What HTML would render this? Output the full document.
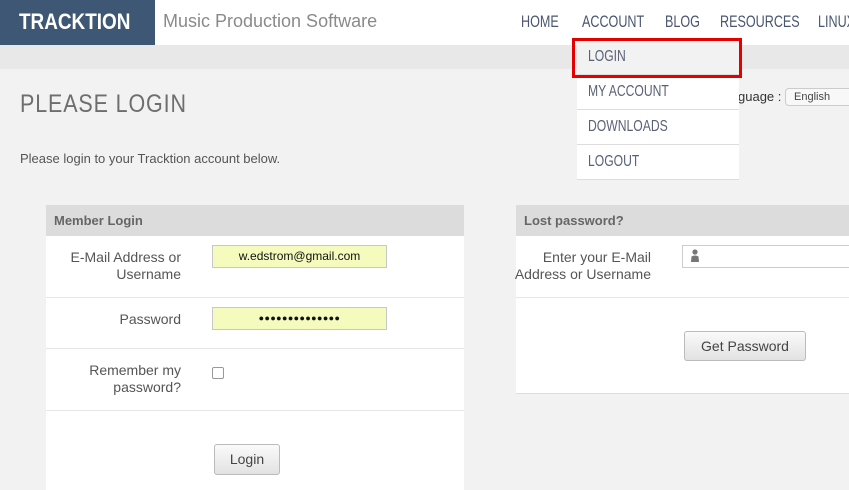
<!DOCTYPE html>
<html><head><style>
*{margin:0;padding:0;box-sizing:border-box}
body{width:849px;height:490px;overflow:hidden;background:#f2f2f2;font-family:"Liberation Sans",sans-serif;position:relative}
.a{position:absolute;white-space:nowrap}
.c{transform:scaleX(0.74);transform-origin:0 0}
.nav{font-size:17px;color:#4a5670;top:12px}
.dd{left:577px;width:162px;height:35px;background:#fff;border-bottom:1px solid #ddd;font-size:16px;color:#5a6278;padding:8px 0 0 11px}
.dd span{display:inline-block;transform:scaleX(0.76);transform-origin:0 0}
.lbl{font-size:14px;color:#555;text-align:right;line-height:17px}
.sep{height:1px;background:#e6e6e6}
.inp{background:#f5fbbd;border:1px solid #c8c8c8;height:23px;font-size:12px;color:#111;text-align:center;line-height:21px}
.btn{border:1px solid #bbb;border-radius:3px;background:linear-gradient(#fafafa,#e2e2e2);font-size:14px;color:#444;text-align:center}
</style></head><body>
<div class="a" style="left:0;top:0;width:849px;height:45px;background:#fff"></div>
<div class="a" style="left:0;top:0;width:155px;height:45px;background:#3e5775"></div>
<div class="a c" style="left:19px;top:9px;color:#fff;font-weight:bold;font-size:22px;transform:scaleX(0.86)">TRACKTION</div>
<div class="a" style="left:163px;top:11px;font-size:18px;color:#8a8a8a">Music Production Software</div>
<div class="a nav c" style="left:521px">HOME</div>
<div class="a nav c" style="left:582px">ACCOUNT</div>
<div class="a nav c" style="left:665px">BLOG</div>
<div class="a nav c" style="left:720px">RESOURCES</div>
<div class="a nav c" style="left:818px">LINUX</div>
<div class="a" style="left:0;top:45px;width:849px;height:24px;background:#e8e8e8"></div>
<div class="a c" style="left:20px;top:90px;font-size:25px;color:#6e6e6e;letter-spacing:1px;transform:scaleX(0.86)">PLEASE LOGIN</div>
<div class="a" style="left:20px;top:151px;font-size:13px;color:#555">Please login to your Tracktion account below.</div>
<div class="a" style="left:738px;top:89px;font-size:13px;color:#333">guage :</div>
<div class="a" style="left:785px;top:88px;width:70px;height:18px;border:1px solid #ccc;border-radius:4px;background:#f8f8f8;font-size:11px;color:#444;padding:2px 0 0 8px">English</div>

<div class="a dd" style="top:40px;background:#f2f2f2"><span>LOGIN</span></div>
<div class="a dd" style="top:75px"><span>MY ACCOUNT</span></div>
<div class="a dd" style="top:110px"><span>DOWNLOADS</span></div>
<div class="a dd" style="top:145px"><span>LOGOUT</span></div>
<div class="a" style="left:572px;top:38px;width:170px;height:40px;border:3px solid #e50000"></div>

<div class="a" style="left:46px;top:205px;width:418px;height:285px;background:#fff"></div>
<div class="a" style="left:46px;top:205px;width:418px;height:31px;background:#dcdcdc;font-size:13px;font-weight:bold;color:#666;padding:8px 0 0 8px">Member Login</div>
<div class="a lbl" style="left:50px;top:249px;width:131px">E-Mail Address or<br>Username</div>
<div class="a inp" style="left:212px;top:245px;width:175px">w.edstrom@gmail.com</div>
<div class="a sep" style="left:46px;top:297px;width:418px"></div>
<div class="a lbl" style="left:50px;top:311px;width:131px">Password</div>
<div class="a inp" style="left:212px;top:307px;width:175px;font-size:9px;letter-spacing:0.4px">●●●●●●●●●●●●●●</div>
<div class="a sep" style="left:46px;top:348px;width:418px"></div>
<div class="a lbl" style="left:50px;top:362px;width:131px">Remember my<br>password?</div>
<div class="a" style="left:212px;top:367px;width:12px;height:12px;border:1px solid #999;border-radius:2px;background:#fff"></div>
<div class="a sep" style="left:46px;top:410px;width:418px"></div>
<div class="a btn" style="left:214px;top:444px;width:66px;height:31px;line-height:29px">Login</div>

<div class="a" style="left:516px;top:205px;width:333px;height:189px;background:#fff;border-bottom:1px solid #ddd"></div>
<div class="a" style="left:516px;top:205px;width:333px;height:31px;background:#dcdcdc;font-size:13px;font-weight:bold;color:#666;padding:8px 0 0 8px">Lost password?</div>
<div class="a lbl" style="left:500px;top:249px;width:151px">Enter your E-Mail<br>Address or Username</div>
<div class="a" style="left:682px;top:245px;width:180px;height:23px;border:1px solid #ccc;background:#fff"></div>
<svg class="a" style="left:690px;top:249px" width="10" height="13" viewBox="0 0 10 13"><circle cx="5" cy="3" r="2.6" fill="#777"/><path d="M1 13 L1.5 7.5 Q5 5.5 8.5 7.5 L9 13 Z" fill="#777"/></svg>
<div class="a sep" style="left:516px;top:297px;width:333px"></div>
<div class="a btn" style="left:684px;top:331px;width:122px;height:30px;line-height:28px">Get Password</div>
</body></html>
